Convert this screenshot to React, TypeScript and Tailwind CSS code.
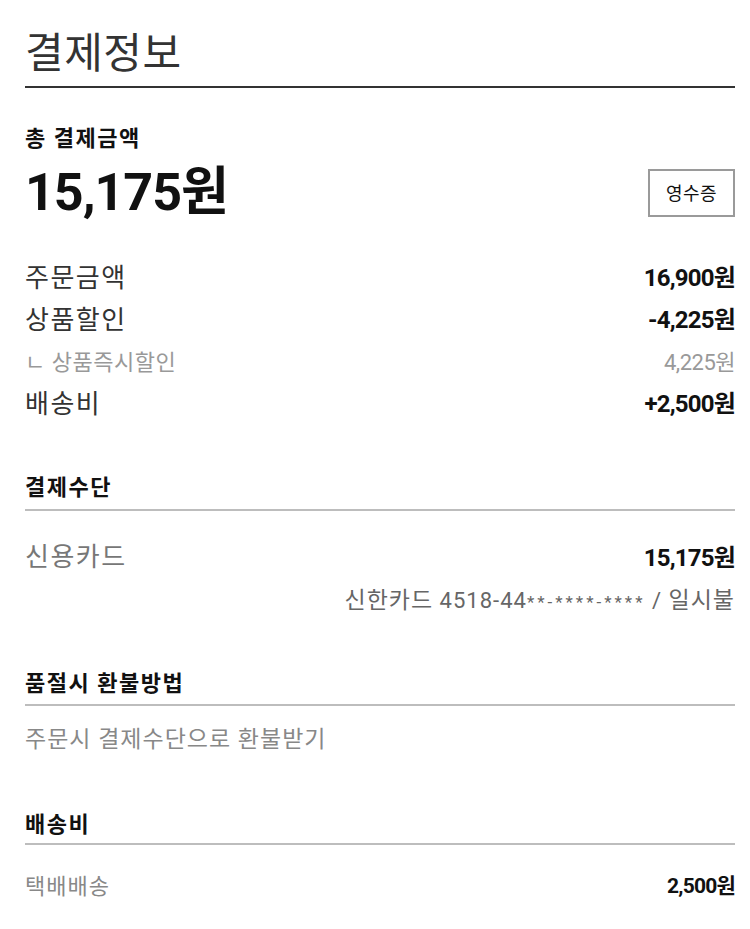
import React from "react";

const font = { fontFamily: "Roboto, 'Noto Sans CJK KR', sans-serif" };

function Row({ label, value, sub }: { label: string; value: string; sub?: boolean }) {
  return (
    <div className="flex items-center justify-between h-[42px]">
      <span className={sub ? "text-[22px] text-[#999] tracking-[0.5px]" : "text-[26px] text-[#333] tracking-[1.5px]"}>
        {label}
      </span>
      <span
        className={
          sub
            ? "text-[22px] text-[#999] tracking-[-0.5px]"
            : "text-[24px] font-bold text-[#111] tracking-[-0.8px]"
        }
      >
        {value}
      </span>
    </div>
  );
}

function SectionHeader({ title, pb }: { title: string; pb: string }) {
  return (
    <div className={`border-b-2 border-[#bdbdbd] ${pb}`}>
      <h3 className="text-[22px] font-bold text-[#111] leading-[26px] tracking-[1.5px]">{title}</h3>
    </div>
  );
}

export default function App() {
  return (
    <div className="w-[750px] min-h-[929px] bg-white pl-[25px] pr-[15px]" style={font}>
      <div className="pt-[30px] pb-[8px] border-b-2 border-[#333]">
        <h1 className="text-[42px] font-normal text-[#333] leading-[48px] tracking-[0.5px]">결제정보</h1>
      </div>

      <div className="pt-[38px]">
        <div className="text-[22px] font-bold text-[#111] leading-[26px] tracking-[1.5px]">총 결제금액</div>
        <div className="flex items-center justify-between mt-[11px]">
          <span className="text-[52px] font-bold text-[#111] tracking-[-1px] leading-[60px]">15,175원</span>
          <button className="w-[87px] h-[48px] border-2 border-[#9a9a9a] bg-white text-[18px] text-[#111] tracking-[0.5px]">
            영수증
          </button>
        </div>
      </div>

      <div className="mt-[34px]">
        <Row label="주문금액" value="16,900원" />
        <Row label="상품할인" value="-4,225원" />
        <Row label="ㄴ 상품즉시할인" value="4,225원" sub />
        <Row label="배송비" value="+2,500원" />
      </div>

      <div className="mt-[50px]">
        <SectionHeader title="결제수단" pb="pb-[8px]" />
        <div className="flex items-center justify-between mt-[27px]">
          <span className="text-[26px] text-[#777] tracking-[1.5px]">신용카드</span>
          <span className="text-[24px] font-bold text-[#111] tracking-[-0.8px]">15,175원</span>
        </div>
        <div className="text-right text-[22px] text-[#666] mt-[7px] tracking-[1px]">
          <span className="text-[23px] tracking-[1px]">신한카드</span> 4518-44
          <span className="text-[17px] tracking-[3px]">**-****-****</span> /{" "}
          <span className="text-[23px] tracking-[1px]">일시불</span>
        </div>
      </div>

      <div className="mt-[52px]">
        <SectionHeader title="품절시 환불방법" pb="pb-[7px]" />
        <div className="text-[23px] text-[#888] mt-[17px] tracking-[1px]">주문시 결제수단으로 환불받기</div>
      </div>

      <div className="mt-[55px]">
        <SectionHeader title="배송비" pb="pb-[5px]" />
        <div className="flex items-center justify-between mt-[25px]">
          <span className="text-[22px] text-[#888] tracking-[1px]">택배배송</span>
          <span className="text-[21px] font-bold text-[#111] tracking-[-0.8px]">2,500원</span>
        </div>
      </div>
    </div>
  );
}
